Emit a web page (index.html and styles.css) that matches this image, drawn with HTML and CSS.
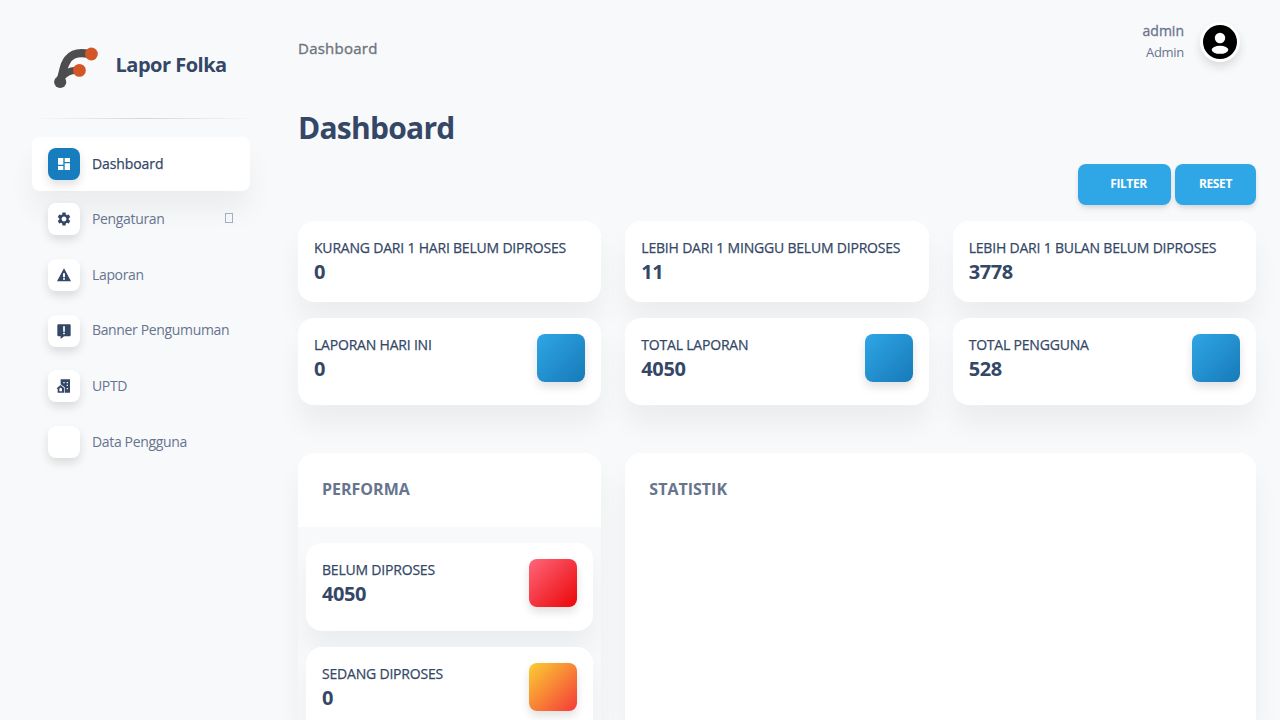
FILE: index.html
```html
<!DOCTYPE html>
<html lang="id">
<head>
<meta charset="utf-8">
<title>Dashboard - Lapor Folka</title>
<link rel="stylesheet" href="styles.css">
</head>
<body>
<div class="app">
  <aside class="sidebar">
    <div class="brand">
      <svg class="brand-logo" width="48" height="48" viewBox="0 0 48 48">
        <g fill="none" stroke="#4d4d4d" stroke-linecap="round">
          <path stroke-width="8" d="M8 39 C12 30 10 25 16 17 C21 11 28 10 37 12"/>
          <path stroke-width="7" d="M9 36 C13 31 16 29 26 28"/>
        </g>
        <circle cx="8.2" cy="40" r="6.1" fill="#4d4d4d"/>
        <circle cx="39.4" cy="12" r="6.4" fill="#d35627"/>
        <circle cx="27.4" cy="28.4" r="6.4" fill="#d35627"/>
      </svg>
      <span class="brand-name">Lapor Folka</span>
    </div>
    <div class="divider"></div>
    <nav class="nav">
      <a class="nav-link active">
        <span class="nav-icon"><svg width="16" height="16" viewBox="0 0 24 24"><path d="M3 13h8V3H3v10zm0 8h8v-6H3v6zm10 0h8V11h-8v10zm0-18v6h8V3h-8z"/></svg></span>
        <span class="nav-text">Dashboard</span>
      </a>
      <a class="nav-link">
        <span class="nav-icon"><svg width="16" height="16" viewBox="0 0 24 24"><path d="M19.14 12.94c.04-.3.06-.61.06-.94 0-.32-.02-.64-.07-.94l2.03-1.58c.18-.14.23-.41.12-.61l-1.92-3.32c-.12-.22-.37-.29-.59-.22l-2.39.96c-.5-.38-1.03-.7-1.62-.94l-.36-2.54c-.04-.24-.24-.41-.48-.41h-3.84c-.24 0-.43.17-.47.41l-.36 2.54c-.59.24-1.13.57-1.62.94l-2.39-.96c-.22-.08-.47 0-.59.22L2.74 8.87c-.12.21-.08.47.12.61l2.03 1.58c-.05.3-.09.63-.09.94s.02.64.07.94l-2.03 1.58c-.18.14-.23.41-.12.61l1.92 3.32c.12.22.37.29.59.22l2.39-.96c.5.38 1.03.7 1.62.94l.36 2.54c.05.24.24.41.48.41h3.84c.24 0 .44-.17.47-.41l.36-2.54c.59-.24 1.13-.56 1.62-.94l2.39.96c.22.08.47 0 .59-.22l1.92-3.32c.12-.22.07-.47-.12-.61l-2.01-1.58zM12 15.6c-1.98 0-3.6-1.62-3.6-3.6s1.62-3.6 3.6-3.6 3.6 1.62 3.6 3.6-1.62 3.6-3.6 3.6z"/></svg></span>
        <span class="nav-text">Pengaturan</span>
        <span class="nav-caret"></span>
      </a>
      <a class="nav-link">
        <span class="nav-icon"><svg width="16" height="16" viewBox="0 0 24 24"><path d="M1.500 21.500h21L12 2 1.500 21.500zm12-2.500h-3v-2h3v2zm0-3.500h-3V9.500h3v6z"/></svg></span>
        <span class="nav-text">Laporan</span>
      </a>
      <a class="nav-link">
        <span class="nav-icon"><svg width="16" height="16" viewBox="0 0 24 24"><path d="M20.500 2h-17c-1 0-1.500.6-1.500 1.500v15c0 1 .5 1.500 1.500 1.500H7v4l5-4h8.500c1 0 1.500-.5 1.500-1.500v-15c0-.9-.5-1.500-1.500-1.500zm-7.200 15h-2.600v-2.200h2.600V17zm0-4h-2.600V5h2.600v8z"/></svg></span>
        <span class="nav-text">Banner Pengumuman</span>
      </a>
      <a class="nav-link">
        <span class="nav-icon"><svg width="16" height="16" viewBox="0 0 24 24"><path fill-rule="evenodd" d="M7 2h14v20h-8v-8L7 9.500zM11 6v2h2V6zm5 0v2h2V6zm0 4v2h2v-2zm0 5v2h2v-2z"/><path fill-rule="evenodd" d="M1 15.500 7 10.500l5 4.500v7H2.500v-5.500zM5 16v4h4v-4l-2-1.800z"/></svg></span>
        <span class="nav-text">UPTD</span>
      </a>
      <a class="nav-link">
        <span class="nav-icon"></span>
        <span class="nav-text">Data Pengguna</span>
      </a>
    </nav>
  </aside>

  <main class="main">
    <header class="topbar">
      <span class="crumb">Dashboard</span>
      <div class="user">
        <div class="user-text">
          <span class="user-name">admin</span>
          <span class="user-role">Admin</span>
        </div>
        <span class="avatar"><svg width="40" height="40" viewBox="0 0 40 40"><circle cx="20" cy="20" r="17"/><circle cx="20" cy="16" r="5.200" fill="#fff"/><ellipse cx="20" cy="27.800" rx="8.300" ry="4" fill="#fff"/></svg></span>
      </div>
    </header>
    <h1 class="title">Dashboard</h1>
    <div class="actions">
      <button class="btn btn-filter">FILTER</button>
      <button class="btn">RESET</button>
    </div>
    <section class="stats">
      <div class="card stat"><div><p class="label">KURANG DARI 1 HARI BELUM DIPROSES</p><h5 class="value">0</h5></div></div>
      <div class="card stat"><div><p class="label">LEBIH DARI 1 MINGGU BELUM DIPROSES</p><h5 class="value">11</h5></div></div>
      <div class="card stat"><div><p class="label">LEBIH DARI 1 BULAN BELUM DIPROSES</p><h5 class="value">3778</h5></div></div>
      <div class="card stat"><div><p class="label">LAPORAN HARI INI</p><h5 class="value">0</h5></div><span class="tile blue"></span></div>
      <div class="card stat"><div><p class="label">TOTAL LAPORAN</p><h5 class="value">4050</h5></div><span class="tile blue"></span></div>
      <div class="card stat"><div><p class="label">TOTAL PENGGUNA</p><h5 class="value">528</h5></div><span class="tile blue"></span></div>
    </section>
    <section class="panels">
      <div class="panel performa">
        <h6 class="panel-head">PERFORMA</h6>
        <div class="performa-list">
          <div class="card stat"><div><p class="label">BELUM DIPROSES</p><h5 class="value">4050</h5></div><span class="tile red"></span></div>
          <div class="card stat"><div><p class="label">SEDANG DIPROSES</p><h5 class="value">0</h5></div><span class="tile orange"></span></div>
        </div>
      </div>
      <div class="panel statistik">
        <h6 class="panel-head">STATISTIK</h6>
      </div>
    </section>
  </main>
</div>
</body>
</html>
```
FILE: styles.css
```css
* { box-sizing: border-box; }
body {
  margin: 0;
  height: 720px;
  overflow: hidden;
  background: #f8f9fb;
  color: #67748e;
  font-family: "Open Sans", sans-serif;
  font-size: 16px;
  line-height: 1.6;
}
h1, h5, h6, p { margin: 0; }
.app { display: flex; height: 720px; }

.sidebar { width: 274px; flex: none; padding: 32px 24px 0 32px; }
.brand { display: flex; align-items: center; height: 72px; padding-left: 20px; }
.brand-logo { margin-top: -4px; }
.brand-name {
  margin: -6px 0 0 15.500px;
  font-size: 20px;
  font-weight: 700;
  color: #344767;
  letter-spacing: -0.5px;
  white-space: nowrap;
}
.divider {
  height: 1px;
  margin: 14px -8px 18px 0;
  background: linear-gradient(90deg, transparent, rgba(0, 0, 0, .14), transparent);
}
.nav { display: flex; flex-direction: column; gap: 2px; }
.nav-link {
  display: flex;
  align-items: center;
  width: 218px;
  height: 53.6px;
  padding: 0 16px;
  border-radius: 8px;
  font-size: 14px;
  font-weight: 400;
  letter-spacing: -0.35px;
  white-space: nowrap;
}
.nav-link.active {
  background: #fff;
  color: #344767;
  letter-spacing: -0.1px;
  -webkit-text-stroke: .25px currentColor;
  box-shadow: 0 20px 27px 0 rgba(0, 0, 0, .05);
}
.nav-icon {
  display: flex;
  align-items: center;
  justify-content: center;
  width: 32px;
  height: 32px;
  flex: none;
  margin-right: 12px;
  border-radius: 8px;
  background: #fff;
  fill: #344767;
  box-shadow: 0 5px 10px 0 rgba(0, 0, 0, .12);
}
.active .nav-icon { background: #177dbf; fill: #fff; }
.nav-caret {
  width: 8px;
  height: 10px;
  margin: -3px 1px 0 auto;
  border: 1px solid #a5acc8;
}

.main { flex: 1; min-width: 0; padding: 0 24px; }
.topbar { display: flex; justify-content: space-between; height: 96px; }
.crumb {
  margin-top: 36px;
  font-size: 15px;
  line-height: 24px;
  letter-spacing: .25px;
  color: #6c757d;
  -webkit-text-stroke: .35px currentColor;
}
.user { display: flex; margin: 20px 16px 0 0; }
.user-text { display: flex; flex-direction: column; align-items: flex-end; }
.user-name { font-size: 14px; line-height: 22px; -webkit-text-stroke: .3px currentColor; }
.user-role { font-size: 13px; line-height: 21px; letter-spacing: -0.3px; }
.avatar {
  width: 40px;
  height: 40px;
  margin: 2px 0 0 16px;
  border-radius: 50%;
  background: #fff;
  box-shadow: 0 5px 10px 0 rgba(0, 0, 0, .12);
}
.avatar svg { display: block; }
.title {
  margin-top: 11px;
  font-size: 30px;
  line-height: 41px;
  font-weight: 700;
  color: #344767;
  letter-spacing: -0.75px;
}
.actions { display: flex; justify-content: flex-end; gap: 4px; margin-top: 16px; }
.btn {
  width: 81px;
  height: 41px;
  padding: 0 0 2px;
  border: 0;
  border-radius: 8px;
  background: #2fa6e6;
  color: #fff;
  font: 700 12px/17px "Open Sans", sans-serif;
  letter-spacing: -0.4px;
  box-shadow: 0 4px 7px -1px rgba(0, 0, 0, .11), 0 2px 4px -1px rgba(0, 0, 0, .07);
}
.btn-filter { width: 93px; padding-left: 8px; }

.stats {
  display: grid;
  grid-template-columns: repeat(3, 1fr);
  grid-template-rows: 81px 87px;
  gap: 16px 24px;
  margin-top: 16px;
}
.card {
  border-radius: 16px;
  background: #fff;
  box-shadow: 0 20px 27px 0 rgba(0, 0, 0, .05);
}
.stat { display: flex; justify-content: space-between; padding: 16px; }
.label {
  font-size: 14px;
  line-height: 21px;
  color: #344767;
  letter-spacing: -0.2px;
  white-space: nowrap;
  -webkit-text-stroke: .25px currentColor;
}
.value { font-size: 20px; line-height: 27px; font-weight: 700; color: #344767; letter-spacing: -0.4px; }
.tile {
  width: 48px;
  height: 48px;
  flex: none;
  border-radius: 8px;
  box-shadow: 0 5px 10px 0 rgba(0, 0, 0, .12);
}
.blue { background: linear-gradient(135deg, #2fa6e6, #177ab8); }
.red { background: linear-gradient(135deg, #ff667c, #ea0606); }
.orange { background: linear-gradient(135deg, #fbcf33, #f53939); }

.panels {
  display: grid;
  grid-template-columns: 303.333px 1fr;
  gap: 24px;
  height: 267px;
  margin-top: 48px;
}
.panel { min-height: 0; overflow: hidden; border-radius: 16px 16px 0 0; box-shadow: 0 20px 27px 0 rgba(0, 0, 0, .05); }
.panel-head {
  height: 74px;
  padding: 24px 24px 0;
  font-size: 16px;
  line-height: 24px;
  font-weight: 700;
  color: #67748e;
}
.performa .panel-head { background: #fff; }
.performa-list { display: flex; flex-direction: column; gap: 16px; padding: 16px 8px 0; }
.performa-list .card { height: 88px; flex: none; }
.statistik { background: #fff; }
```
